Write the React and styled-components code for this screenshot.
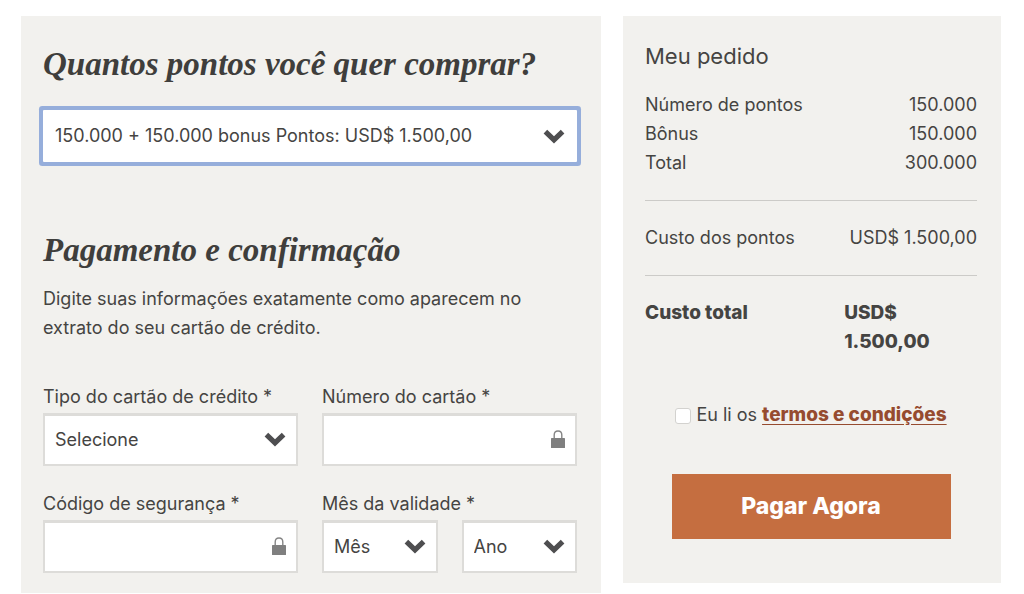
import React, { useState } from "react";
import styled, { createGlobalStyle } from "styled-components";

const GlobalStyle = createGlobalStyle`
  *, *::before, *::after {
    box-sizing: border-box;
  }
  body {
    margin: 0;
    background: #fff;
    color: #454442;
    font-family: Inter, "Liberation Sans", sans-serif;
    font-size: 18px;
    line-height: 29px;
  }
`;

// Layout
const Page = styled.main`
  display: grid;
  grid-template-columns: 580fr 378fr;
  align-items: start;
  gap: 22px;
  padding: 16px 23px 0 21px;
`;

const Panel = styled.section`
  background: #f2f1ee;
  padding: 28px 24px 20px 22px;
`;

const OrderPanel = styled(Panel)`
  padding-top: 26px;
  padding-bottom: 44px;
`;

const FieldGrid = styled.div`
  display: grid;
  grid-template-columns: 1fr 1fr;
  gap: 23px 24px;
`;

const SplitRow = styled.div`
  display: grid;
  grid-template-columns: 1fr 1fr;
  gap: 24px;
`;

// Text
const Heading = styled.h2`
  margin: 0;
  color: #3f3e3c;
  font-family: "Liberation Serif", serif;
  font-size: 33px;
  font-style: italic;
  font-weight: 700;
  line-height: 40px;
`;

const Intro = styled.p`
  margin: 14px 0 40px;
`;

const OrderTitle = styled.h3`
  margin: 0 0 19px;
  font-size: 22px;
  font-weight: 400;
  line-height: 29px;
`;

// Form controls
const Label = styled.label`
  display: block;
  margin-bottom: 2px;
`;

const Control = styled.div`
  position: relative;
  margin: ${(props) => props.$margin || "0"};
`;

const Select = styled.select`
  display: block;
  appearance: none;
  width: 100%;
  height: 53px;
  padding: 0 40px 2px 10px;
  border: 2px solid #dddcd9;
  border-top-width: 3px;
  border-radius: 0;
  outline: none;
  background: #fff;
  color: inherit;
  font: inherit;
`;

const PointsSelect = styled(Select)`
  height: 52px;
  padding-left: 12px;
  border: 0;
  border-radius: 1px;
  box-shadow: 0 0 0 4px #96aedb;
`;

const Input = styled.input`
  display: block;
  width: 100%;
  height: 53px;
  padding: 0 40px 0 10px;
  border: 2px solid #dddcd9;
  border-top-width: 3px;
  border-radius: 0;
  outline: none;
  background: #fff;
  color: inherit;
  font: inherit;
`;

const ChevronSvg = styled.svg`
  position: absolute;
  top: 19px;
  right: 12px;
  width: 22px;
  height: 15px;
  pointer-events: none;
`;

const LockSvg = styled.svg`
  position: absolute;
  top: 17px;
  right: 12px;
  width: 14px;
  height: 18px;
  pointer-events: none;
`;

// Order summary
const Lines = styled.dl`
  margin: 0;
  padding: ${(props) => props.$padding || "0"};
  border-bottom: ${(props) => (props.$last ? "0" : "1px solid #cccbc8")};
`;

const Line = styled.div`
  display: flex;
  justify-content: space-between;
  font-size: ${(props) => (props.$bold ? "19px" : "18px")};
  font-weight: ${(props) => (props.$bold ? 800 : 400)};
`;

const Term = styled.dt`
  margin: 0;
`;

const Value = styled.dd`
  margin: 0;
  text-align: right;
`;

const TotalValue = styled(Value)`
  width: 40%;
  text-align: left;
`;

const Terms = styled.div`
  display: flex;
  align-items: center;
  justify-content: center;
  gap: 5px;
  margin: 44px 0 45px;
  white-space: nowrap;
`;

const Checkbox = styled.input`
  appearance: none;
  flex: none;
  width: 16px;
  height: 16px;
  margin: 2px 0 0;
  border: 1px solid #d3d2cf;
  border-radius: 3px;
  background: #fff;

  &:checked {
    background: #c56e40;
  }
`;

const TermsLink = styled.a`
  color: #964b2f;
  font-size: 19px;
  font-weight: 800;
  text-decoration: underline;
  text-underline-offset: 3px;
`;

const PayButton = styled.button`
  display: block;
  width: calc(100% - 53px);
  height: 65px;
  margin: 0 auto;
  border: 0;
  background: #c56e40;
  color: #fff;
  font: inherit;
  font-size: 23px;
  font-weight: 800;
  cursor: pointer;
`;

const Chevron = () => (
  <ChevronSvg viewBox="0 0 22 15" aria-hidden="true">
    <path
      d="M4.2 0.7 L11 7.2 L17.8 0.7 L21.4 4.4 L11 14.4 L0.6 4.4 Z"
      fill="#4e4e50"
    />
  </ChevronSvg>
);

const Lock = () => (
  <LockSvg viewBox="0 0 14 18" aria-hidden="true">
    <path
      d="M3.2 9 V5 C3.2 2.4 4.8 1 7 1 C9.2 1 10.8 2.4 10.8 5 V9"
      fill="none"
      stroke="#858585"
      strokeWidth="1.4"
    />
    <rect x="0" y="8" width="14" height="10" rx="0.6" fill="#7f7f7f" />
  </LockSvg>
);

const PaymentForm = () => (
  <Panel>
    <Heading as="h1">Quantos pontos você quer comprar?</Heading>
    <Control $margin="26px 0 68px">
      <PointsSelect aria-label="Quantos pontos você quer comprar?">
        <option>150.000 + 150.000 bonus Pontos: USD$ 1.500,00</option>
      </PointsSelect>
      <Chevron />
    </Control>

    <Heading>Pagamento e confirmação</Heading>
    <Intro>
      Digite suas informações exatamente como aparecem no extrato do seu cartão
      de crédito.
    </Intro>

    <FieldGrid>
      <div>
        <Label htmlFor="card-type">Tipo do cartão de crédito *</Label>
        <Control>
          <Select id="card-type">
            <option>Selecione</option>
          </Select>
          <Chevron />
        </Control>
      </div>
      <div>
        <Label htmlFor="card-number">Número do cartão *</Label>
        <Control>
          <Input id="card-number" type="text" />
          <Lock />
        </Control>
      </div>
      <div>
        <Label htmlFor="security-code">Código de segurança *</Label>
        <Control>
          <Input id="security-code" type="text" />
          <Lock />
        </Control>
      </div>
      <div>
        <Label htmlFor="month">Mês da validade *</Label>
        <SplitRow>
          <Control>
            <Select id="month">
              <option>Mês</option>
            </Select>
            <Chevron />
          </Control>
          <Control>
            <Select aria-label="Ano da validade">
              <option>Ano</option>
            </Select>
            <Chevron />
          </Control>
        </SplitRow>
      </div>
    </FieldGrid>
  </Panel>
);

const points = [
  ["Número de pontos", "150.000"],
  ["Bônus", "150.000"],
  ["Total", "300.000"],
];

const OrderSummary = () => {
  const [accepted, setAccepted] = useState(false);

  return (
    <OrderPanel as="aside">
      <OrderTitle>Meu pedido</OrderTitle>
      <Lines $padding="0 0 23px">
        {points.map(([term, value]) => (
          <Line key={term}>
            <Term>{term}</Term>
            <Value>{value}</Value>
          </Line>
        ))}
      </Lines>
      <Lines $padding="22px 0 23px">
        <Line>
          <Term>Custo dos pontos</Term>
          <Value>USD$ 1.500,00</Value>
        </Line>
      </Lines>
      <Lines $padding="22px 0 0" $last>
        <Line $bold>
          <Term>Custo total</Term>
          <TotalValue>
            USD$
            <br />
            1.500,00
          </TotalValue>
        </Line>
      </Lines>

      <Terms>
        <Checkbox
          id="terms"
          type="checkbox"
          checked={accepted}
          onChange={(e) => setAccepted(e.target.checked)}
        />
        <label htmlFor="terms">
          Eu li os <TermsLink href="#termos">termos e condições</TermsLink>
        </label>
      </Terms>
      <PayButton type="button">Pagar Agora</PayButton>
    </OrderPanel>
  );
};

const App = () => (
  <>
    <GlobalStyle />
    <Page>
      <PaymentForm />
      <OrderSummary />
    </Page>
  </>
);

export default App;
